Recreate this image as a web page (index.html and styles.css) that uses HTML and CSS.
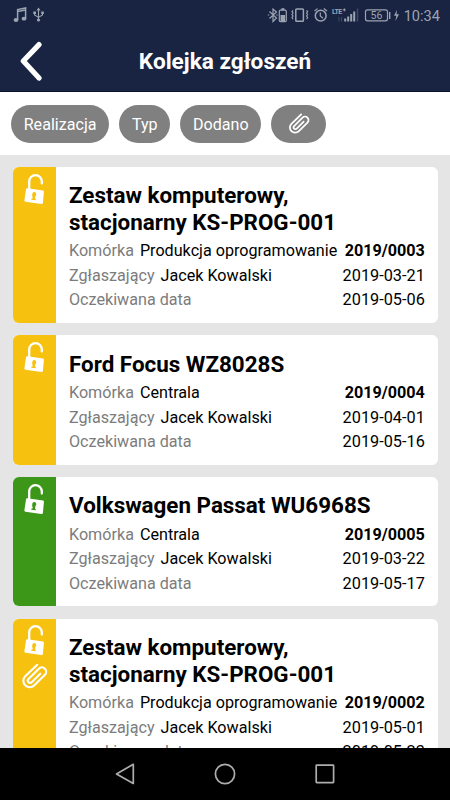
FILE: index.html
```html
<!DOCTYPE html>
<html lang="pl">
<head>
    <meta charset="UTF-8">
    <meta name="viewport" content="width=device-width, initial-scale=1.0">
    <title>Kolejka zgłoszeń</title>
    <link rel="stylesheet" href="styles.css">
</head>
<body>
    <svg class="hidden">
        <symbol id="lock" viewBox="0 0 22 34">
            <path d="M6.2 16V8.4a6.3 6.3 0 0 1 12.6 0V10.6" fill="none" stroke="currentColor" stroke-width="2.3" stroke-linecap="round"/>
            <path fill="currentColor" fill-rule="evenodd" d="M4.4 15.3L20 17.4Q21.1 17.6 20.9 18.9L19.9 30Q19.7 31.2 18.4 31L2.5 28.7Q1.2 28.5 1.4 27.2L3 16.4Q3.2 15.1 4.4 15.3ZM11.5 19.1A2.1 2.1 0 0 0 9.6 22.4L8.9 22.3V23.5H9.8L9.5 25.5H8.4L8.3 26.7L12.7 27.3L12.8 26.1L12 25.9L12.5 22.8A2.1 2.1 0 0 0 11.5 19.1Z"/>
        </symbol>
        <symbol id="clip" viewBox="0 0 24 24">
            <path transform="matrix(0 -1 -1 0 24 24)" d="M22.4 9.6L12.25 20.24a5.5 5.5 0 0 1-8.1-8.1l9.4-9.4a3.7 3.7 0 0 1 5.4 5.4l-9.2 9.19a2 2 0 0 1-2.83-2.83l7.6-7.6" fill="none" stroke="currentColor" stroke-width="1.9" stroke-linecap="round" stroke-linejoin="round"/>
        </symbol>
    </svg>

    <div class="status-bar">
        <svg class="status-left" width="34" height="16" viewBox="0 0 34 16">
            <path d="M4.6 13V2.6L12.6 1V11.6M4.6 4.6L12.6 3" fill="none" stroke="currentColor" stroke-width="1.5"/>
            <ellipse cx="3" cy="13" rx="2.4" ry="1.9" fill="currentColor"/>
            <ellipse cx="11" cy="11.7" rx="2.4" ry="1.9" fill="currentColor"/>
            <path d="M25.5 2V13M21.6 5.5V8L25.5 10.4L29.5 8V5.5" fill="none" stroke="currentColor" stroke-width="1.1"/>
            <path d="M25.5 .4L27.5 3.4H23.5ZM20.3 4.4H23V7H20.3ZM28.2 4.4H30.8V7H28.2Z" fill="currentColor"/>
            <circle cx="25.5" cy="13" r="1.6" fill="currentColor"/>
        </svg>
        <div class="status-right">
            <svg width="133" height="18" viewBox="267 6 133 18">
                <g fill="none" stroke="currentColor" stroke-width="1.2">
                    <path d="M269.5 11.5L276.5 18L273 21.5V9L276.5 12L269.5 18.5"/>
                    <path d="M267.8 15H269.3M276.2 15H277.7"/>
                    <rect x="279.3" y="10.2" width="7" height="11.5" rx="1.2"/>
                    <rect x="295.8" y="9" width="7.6" height="12.2" rx=".8" stroke-width="1.5"/>
                    <path d="M293 10.3l-1 1.3 1 1.4-1 1.5 1 1.5-1 1.5 1 1.7M306.6 10.3l1 1.3-1 1.4 1 1.5-1 1.5 1 1.5-1 1.7"/>
                    <circle cx="320.7" cy="15.7" r="5.4" stroke-width="1.5"/>
                    <path d="M320.3 12.4V16L323 18.3M314.5 11L317.6 8.6M323.8 8.6L327 11"/>
                    <rect x="365.5" y="9.8" width="22" height="11" rx="2"/>
                    <path d="M389.7 12V19" stroke-width="1.4"/>
                </g>
                <g fill="currentColor">
                    <rect x="281.4" y="8.2" width="3" height="2"/>
                    <rect x="280.5" y="15" width="4.6" height="6"/>
                    <path d="M344.2 18.5h2v3h-2zM347.2 16.5h2v5h-2zM350.2 14h2v7.5h-2zM353.2 11.5h2v10h-2zM397 9.7L394 15.8H396.4L395.3 21.3L399 14.3H396.5Z"/>
                    <path d="M356.7 8.5h1.6v13h-1.6zM338.5 17h1v4.5h-1zM341 17h1v4.5h-1z" opacity=".3"/>
                    <text x="332" y="14.3" class="lte">LTE</text>
                    <path d="M342.8 9.9h3M344.3 8.4v3" stroke="currentColor"/>
                    <text x="370.6" y="19.2" class="level">56</text>
                </g>
            </svg>
            <span class="clock">10:34</span>
        </div>
    </div>

    <div class="header">
        <svg class="back" width="24" height="40" viewBox="0 0 24 40"><path d="M20 3.6L4.3 20L20 37" fill="none" stroke="#fff" stroke-width="5.2" stroke-linecap="round" stroke-linejoin="round"/></svg>
        <h1>Kolejka zgłoszeń</h1>
    </div>

    <div class="filters">
        <button class="chip">Realizacja</button>
        <button class="chip">Typ</button>
        <button class="chip">Dodano</button>
        <button class="chip chip-icon"><svg width="22" height="22"><use href="#clip"/></svg></button>
    </div>

    <div class="list">
        <div class="card">
            <div class="side"><svg width="22" height="34"><use href="#lock"/></svg></div>
            <div class="content">
                <h2>Zestaw komputerowy, stacjonarny KS-PROG-001</h2>
                <div class="row"><span class="label">Komórka</span><span>Produkcja oprogramowanie</span><span class="number">2019/0003</span></div>
                <div class="row"><span class="label">Zgłaszający</span><span>Jacek Kowalski</span><span class="date">2019-03-21</span></div>
                <div class="row"><span class="label">Oczekiwana data</span><span class="date">2019-05-06</span></div>
            </div>
        </div>

        <div class="card">
            <div class="side"><svg width="22" height="34"><use href="#lock"/></svg></div>
            <div class="content">
                <h2>Ford Focus WZ8028S</h2>
                <div class="row"><span class="label">Komórka</span><span>Centrala</span><span class="number">2019/0004</span></div>
                <div class="row"><span class="label">Zgłaszający</span><span>Jacek Kowalski</span><span class="date">2019-04-01</span></div>
                <div class="row"><span class="label">Oczekiwana data</span><span class="date">2019-05-16</span></div>
            </div>
        </div>

        <div class="card">
            <div class="side green"><svg width="22" height="34"><use href="#lock"/></svg></div>
            <div class="content">
                <h2>Volkswagen Passat WU6968S</h2>
                <div class="row"><span class="label">Komórka</span><span>Centrala</span><span class="number">2019/0005</span></div>
                <div class="row"><span class="label">Zgłaszający</span><span>Jacek Kowalski</span><span class="date">2019-03-22</span></div>
                <div class="row"><span class="label">Oczekiwana data</span><span class="date">2019-05-17</span></div>
            </div>
        </div>

        <div class="card">
            <div class="side">
                <svg width="22" height="34"><use href="#lock"/></svg>
                <svg class="attachment" width="27" height="27"><use href="#clip"/></svg>
            </div>
            <div class="content">
                <h2>Zestaw komputerowy, stacjonarny KS-PROG-001</h2>
                <div class="row"><span class="label">Komórka</span><span>Produkcja oprogramowanie</span><span class="number">2019/0002</span></div>
                <div class="row"><span class="label">Zgłaszający</span><span>Jacek Kowalski</span><span class="date">2019-05-01</span></div>
                <div class="row"><span class="label">Oczekiwana data</span><span class="date">2019-05-23</span></div>
            </div>
        </div>
    </div>

    <div class="nav-bar">
        <svg width="20" height="22" viewBox="0 0 20 22"><path d="M18.3 1.3V20.5L1.5 11Z"/></svg>
        <svg width="22" height="22" viewBox="0 0 22 22"><circle cx="11" cy="11" r="9.6"/></svg>
        <svg width="20" height="22" viewBox="0 0 20 22"><rect x="1.2" y="2.2" width="17.4" height="17.4" rx=".5"/></svg>
    </div>
</body>
</html>
```
FILE: styles.css
```css
* {
    box-sizing: border-box;
}
body {
    font-family: Roboto, sans-serif;
    margin: 0;
    height: 800px;
    display: flex;
    flex-direction: column;
    overflow: hidden;
    background-color: #e5e5e5;
    color: #000;
}
h1, h2 {
    margin: 0;
    font-weight: bold;
}
.hidden {
    display: none;
}
.status-bar {
    display: flex;
    justify-content: space-between;
    align-items: center;
    height: 30px;
    flex-shrink: 0;
    padding: 0 10px 0 13px;
    background-color: #182441;
    color: #9ca3b1;
}
.status-right {
    display: flex;
    align-items: center;
}
.clock {
    margin-left: 4px;
    padding-top: 2px;
    font-size: 14.6px;
    line-height: 28px;
}
.lte {
    font-size: 7px;
    font-weight: bold;
    letter-spacing: -0.5px;
}
.level {
    font-size: 10.5px;
}
.header {
    display: flex;
    align-items: center;
    height: 62px;
    flex-shrink: 0;
    padding: 0 43px 0 19px;
    background-color: #182441;
    border-bottom: 1px solid #0b1330;
}
.header h1 {
    flex: 1;
    padding-top: 2px;
    color: #fff;
    font-size: 22.6px;
    line-height: 30px;
    text-align: center;
}
.filters {
    display: flex;
    gap: 10px;
    height: 63px;
    flex-shrink: 0;
    padding: 13px 11px;
    background-color: #fff;
}
.chip {
    height: 37.5px;
    padding: 1px 12.7px 0;
    border: none;
    border-radius: 19px;
    background-color: #808080;
    color: #fff;
    font-family: inherit;
    font-size: 16.1px;
}
.chip-icon {
    display: flex;
    align-items: center;
    justify-content: center;
    width: 55px;
}
.list {
    display: flex;
    flex-direction: column;
    gap: 12.5px;
    flex: 1;
    min-height: 0;
    padding: 12.3px 12.5px 0;
    overflow: hidden;
}
.card {
    display: flex;
    flex-shrink: 0;
    border-radius: 6px;
    background-color: #fff;
    overflow: hidden;
}
.side {
    display: flex;
    flex-direction: column;
    align-items: center;
    flex-shrink: 0;
    width: 43.5px;
    padding-top: 5.5px;
    background-color: #f6c10f;
    color: #fff;
}
.side.green {
    background-color: #3c9718;
}
.attachment {
    margin-top: 5px;
}
.content {
    flex: 1;
    padding: 15.2px 12.7px 10px 13px;
}
.content h2 {
    max-width: 320px;
    margin-bottom: 4px;
    font-size: 22.4px;
    line-height: 26.5px;
}
.row {
    display: flex;
    gap: 6px;
    font-size: 16.15px;
    line-height: 24.5px;
    white-space: nowrap;
}
.label {
    color: #7c7c7c;
}
.number, .date {
    margin-left: auto;
}
.date {
    font-size: 16.3px;
}
.number {
    font-weight: bold;
}
.nav-bar {
    display: flex;
    justify-content: center;
    align-items: center;
    gap: 79px;
    height: 52.5px;
    flex-shrink: 0;
    background-color: #000;
}
.nav-bar svg {
    fill: none;
    stroke: #adadad;
    stroke-width: 1.7;
    stroke-linejoin: round;
}
```
